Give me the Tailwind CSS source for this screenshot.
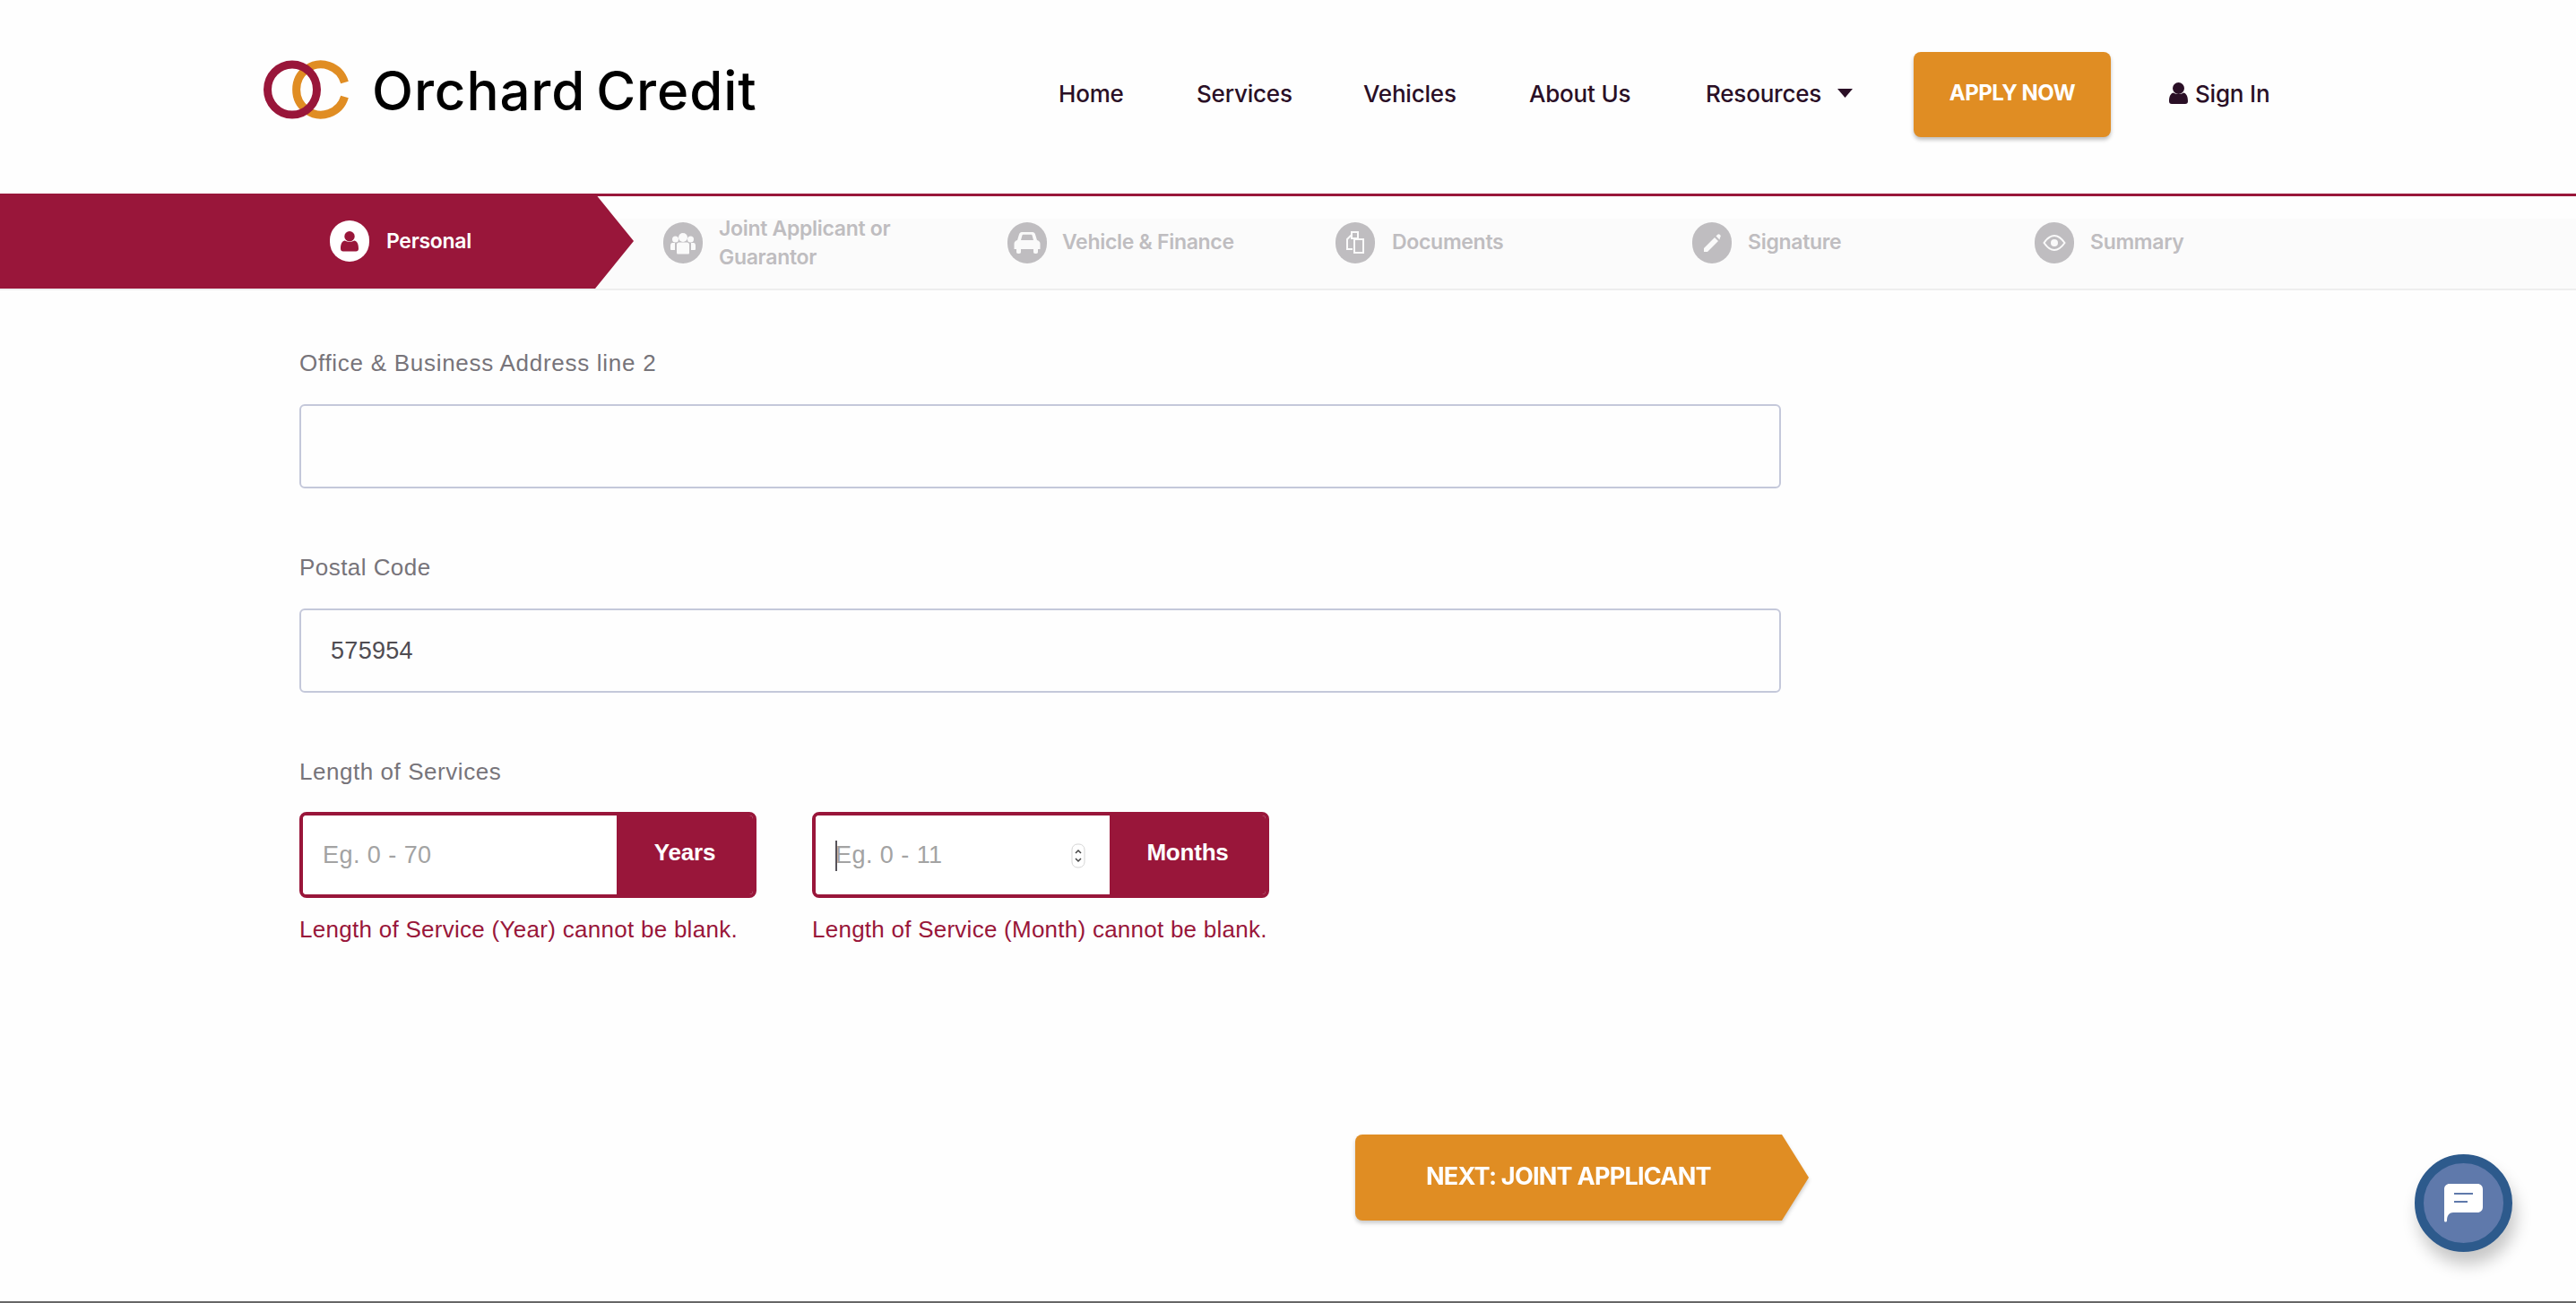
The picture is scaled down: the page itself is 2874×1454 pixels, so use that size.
<!DOCTYPE html>
<html lang="en">
<head>
<meta charset="utf-8">
<title>Orchard Credit</title>
<script src="https://cdn.jsdelivr.net/npm/@tailwindcss/browser@4"></script>
</head>
<body class="bg-[#fefefe] font-['Liberation_Sans',sans-serif]">
<div class="relative flex flex-col w-[2874px] h-[1454px] overflow-hidden">

  <!-- header -->
  <header class="flex items-center h-[216px] shrink-0 pl-[294px] font-['Inter',sans-serif]">
    <div class="flex items-center w-[887px] h-[128px] -mt-[16px]">
      <svg class="shrink-0" width="97" height="66" viewBox="0 0 97 66">
        <path d="M90.500 25A27.500 28 0 1 0 90.500 41" fill="none" stroke="#e08d23" stroke-width="9"/>
        <ellipse cx="32" cy="33" rx="27.500" ry="28" fill="none" stroke="#99163a" stroke-width="9"/>
      </svg>
      <span class="ml-[24px] mt-[2px] text-[60px] leading-none font-medium text-black tracking-[0.9px] [word-spacing:-5px]">Orchard Credit</span>
    </div>
    <nav class="flex items-center mb-[5px] text-[26px] font-medium text-[#2a0f26] tracking-[-0.2px]">
      <a class="w-[154px] pb-[3px]">Home</a>
      <a class="w-[186px] pb-[3px]">Services</a>
      <a class="w-[185px] pb-[3px]">Vehicles</a>
      <a class="w-[197px] pb-[3px]">About Us</a>
      <a class="flex items-center w-[232px] pb-[3px]">Resources
        <svg class="ml-[18px]" width="17" height="10" viewBox="0 0 17 10"><path d="M0 0h17L8.500 10z" fill="#2a0f26"/></svg>
      </a>
      <a class="flex items-center justify-center w-[220px] h-[95px] pb-[3px] rounded-[8px] bg-[#e08d23] text-white text-[24px] font-bold tracking-[-0.5px] shadow-[0_3px_4px_rgba(0,0,0,0.25)]">APPLY NOW</a>
      <a class="flex items-center ml-[65px] pb-[3px]">
        <svg width="21" height="24" viewBox="0 0 21 24"><circle cx="10.500" cy="6.500" r="6.500" fill="#2a0f26"/><path d="M0 21c0-6 2-9 5-9.500 3 2 8 2 11 0 3 .5 5 3.500 5 9.500 0 2-1 3-3 3H3c-2 0-3-1-3-3z" fill="#2a0f26"/></svg>
        <span class="ml-[8px]">Sign In</span>
      </a>
    </nav>
  </header>

  <!-- stepper -->
  <div class="flex h-[108px] shrink-0 border-t-[3px] border-b-2 border-t-[#99163a] border-b-[#eeeeee] bg-[linear-gradient(#fefefe_25px,#fbfbfb_25px)] font-['Inter',sans-serif] text-[23px] font-semibold text-[#bfbdc0] tracking-[-0.3px]">
    <div class="flex items-center w-[707px] pl-[368px] -mt-[3px] bg-[#99163a] [clip-path:polygon(0_0,664px_0,100%_50%,664px_100%,0_100%)] text-white">
      <span class="flex items-center justify-center w-[44px] h-[46px] rounded-full bg-white">
        <svg width="20" height="24" viewBox="0 0 21 24" fill="#99163a"><circle cx="10.500" cy="6.500" r="6"/><path d="M0 21c0-6 2-9 5-9.500 3 2 8 2 11 0 3 .5 5 3.500 5 9.500 0 2-1 3-3 3H3c-2 0-3-1-3-3z"/></svg>
      </span>
      <span class="ml-[19px]">Personal</span>
    </div>
    <div class="flex items-center w-[384px] ml-[33px]">
      <span class="flex items-center justify-center w-[44px] h-[46px] rounded-full bg-[#bfbdc0]">
        <svg width="28" height="26" viewBox="0 0 28 26" fill="#fafafa"><circle cx="14" cy="7" r="5"/><circle cx="5.500" cy="9" r="3.500"/><circle cx="22.500" cy="9" r="3.500"/><path d="M7 15c0-1.500 1-2.500 2.500-2.500h9c1.500 0 2.500 1 2.500 2.500v9c0 1-.5 1.500-1.500 1.500h-11c-1 0-1.500-.5-1.500-1.500z"/><path d="M0 16c0-2 1-3 2-3h3v8H1c-.500 0-1-.5-1-1zM28 16c0-2-1-3-2-3h-3v8h4c.500 0 1-.5 1-1z"/></svg>
      </span>
      <span class="ml-[18px] leading-[32px]">Joint Applicant or<br>Guarantor</span>
    </div>
    <div class="flex items-center w-[366px]">
      <span class="flex items-center justify-center w-[44px] h-[46px] rounded-full bg-[#bfbdc0]">
        <svg width="30" height="24" viewBox="0 0 30 24" fill="#fafafa"><path d="M6 2.500C6.500 1 7.500 0 9 0h12c1.500 0 2.500 1 3 2.500L26 9c2 .5 3.500 2 3.500 4v6H27v3c0 1-.5 2-2 2h-1c-1.500 0-2-1-2-2v-3H8v3c0 1-.5 2-2 2H5c-1.500 0-2-1-2-2v-3H.5v-6c0-2 1.500-3.500 3.500-4zM8 9h14l-1.500-5.500c-.2-.5-.5-.8-1-.8h-9c-.5 0-.8.3-1 .8z"/></svg>
      </span>
      <span class="ml-[17px]">Vehicle &amp; Finance</span>
    </div>
    <div class="flex items-center w-[398px]">
      <span class="flex items-center justify-center w-[44px] h-[46px] rounded-full bg-[#bfbdc0]">
        <svg width="24" height="26" viewBox="0 0 24 26" fill="none" stroke="#fafafa" stroke-width="2"><path d="M8 1h7v7H8zM8 4 3 9v11h6"/><path d="M11 9h10v15H11z"/></svg>
      </span>
      <span class="ml-[19px]">Documents</span>
    </div>
    <div class="flex items-center w-[382px]">
      <span class="flex items-center justify-center w-[44px] h-[46px] rounded-full bg-[#bfbdc0]">
        <svg width="24" height="24" viewBox="0 0 24 24" fill="#fafafa"><path d="M3 18 15 6l4 4L7 22H3z"/><path d="M16.500 4.500l1.500-1.500c1-1 2-1 3 0l0 0c1 1 1 2 0 3L20.500 8.500z"/></svg>
      </span>
      <span class="ml-[18px]">Signature</span>
    </div>
    <div class="flex items-center">
      <span class="flex items-center justify-center w-[44px] h-[46px] rounded-full bg-[#bfbdc0]">
        <svg width="26" height="20" viewBox="0 0 26 20" fill="none"><path d="M1.500 10C5 5 9 2 13 2s8 3 11.500 8C21 15 17 18 13 18S5 15 1.500 10z" stroke="#fafafa" stroke-width="2"/><circle cx="13" cy="10" r="4" fill="#fafafa"/></svg>
      </span>
      <span class="ml-[18px]">Summary</span>
    </div>
  </div>

  <!-- form -->
  <main class="pl-[334px] pt-[65px] text-[26px] text-[#77747a] tracking-[0.45px]">
    <label class="block leading-[32px] mb-[30px] tracking-[0.72px]">Office &amp; Business Address line 2</label>
    <input type="text" class="block w-[1653px] h-[94px] px-[34px] mb-[72px] rounded-[6px] border-2 border-[#c4c8da] bg-transparent text-[27px] text-[#4f4c52]">
    <label class="block leading-[32px] mb-[30px]">Postal Code</label>
    <input type="text" value="575954" class="block w-[1653px] h-[94px] px-[33px] mb-[72px] rounded-[6px] border-2 border-[#c4c8da] bg-transparent text-[27px] tracking-[0.3px] text-[#4f4c52]">
    <label class="block leading-[32px] mb-[29px] tracking-[0.55px]">Length of Services</label>

    <div class="flex gap-[62px]">
      <div class="w-[510px]">
        <div class="flex h-[96px] rounded-[8px] border-4 border-[#99163a] overflow-hidden">
          <input type="text" placeholder="Eg. 0 - 70" class="w-[350px] pl-[22px] bg-white text-[27px] placeholder:text-[#a3a3a3]">
          <span class="flex-1 flex items-center justify-center pb-[6px] bg-[#99163a] text-white font-bold tracking-[-0.2px]">Years</span>
        </div>
        <p class="mt-[19px] leading-[32px] text-[#99163a] tracking-[0.28px] whitespace-nowrap">Length of Service (Year) cannot be blank.</p>
      </div>
      <div class="w-[510px]">
        <div class="relative flex h-[96px] rounded-[8px] border-4 border-[#99163a] overflow-hidden">
          <input type="text" placeholder="Eg. 0 - 11" class="w-[328px] pl-[22px] bg-white text-[27px] placeholder:text-[#a3a3a3]">
          <span class="absolute left-[22px] top-[28px] w-[2px] h-[34px] bg-[#55525a]"></span>
          <svg class="absolute left-[285px] top-[31px]" width="16" height="28" viewBox="0 0 16 28" fill="none">
            <rect x="1" y="1" width="14" height="26" rx="6" fill="#fff" stroke="#d5d5d5"/>
            <path d="M5 11l3-3 3 3M5 17l3 3 3-3" stroke="#444" stroke-width="1.500"/>
          </svg>
          <span class="flex-1 flex items-center justify-center pb-[6px] bg-[#99163a] text-white font-bold tracking-[-0.2px]">Months</span>
        </div>
        <p class="mt-[19px] leading-[32px] text-[#99163a] tracking-[0.25px] whitespace-nowrap">Length of Service (Month) cannot be blank.</p>
      </div>
    </div>

    <div class="ml-[1178px] mt-[213px] w-[506px] drop-shadow-[0_3px_2px_rgba(0,0,0,0.2)]">
      <button class="flex items-center h-[96px] w-[506px] pl-[79px] pb-[2px] rounded-l-[8px] bg-[#e08d23] [clip-path:polygon(0_0,476px_0,100%_50%,476px_100%,0_100%)] font-['Inter',sans-serif] text-[27px] font-bold text-white tracking-[-0.75px]">NEXT: JOINT APPLICANT</button>
    </div>
  </main>

  <!-- page edge and chat widget -->
  <div class="mt-auto h-[2px] bg-[#666666]"></div>
  <button class="absolute left-[2694px] top-[1288px] flex items-center justify-center w-[109px] h-[109px] rounded-full border-[10px] border-[#2d5a8c] bg-[#5f79ab] shadow-[4px_14px_18px_rgba(0,0,0,0.22)]">
    <svg width="43" height="43" viewBox="0 0 43 43">
      <path d="M6 0h31c3.500 0 6 2.500 6 6v20c0 3.500-2.500 6-6 6H10c-4 0-7 3-7 9 0 2-3 2-3 0V6c0-3.500 2.500-6 6-6z" fill="#fff"/>
      <path d="M11 11h21" stroke="#5f79ab" stroke-width="2"/>
      <path d="M11 20h15" stroke="#5f79ab" stroke-width="2"/>
    </svg>
  </button>
</div>
</body>
</html>
